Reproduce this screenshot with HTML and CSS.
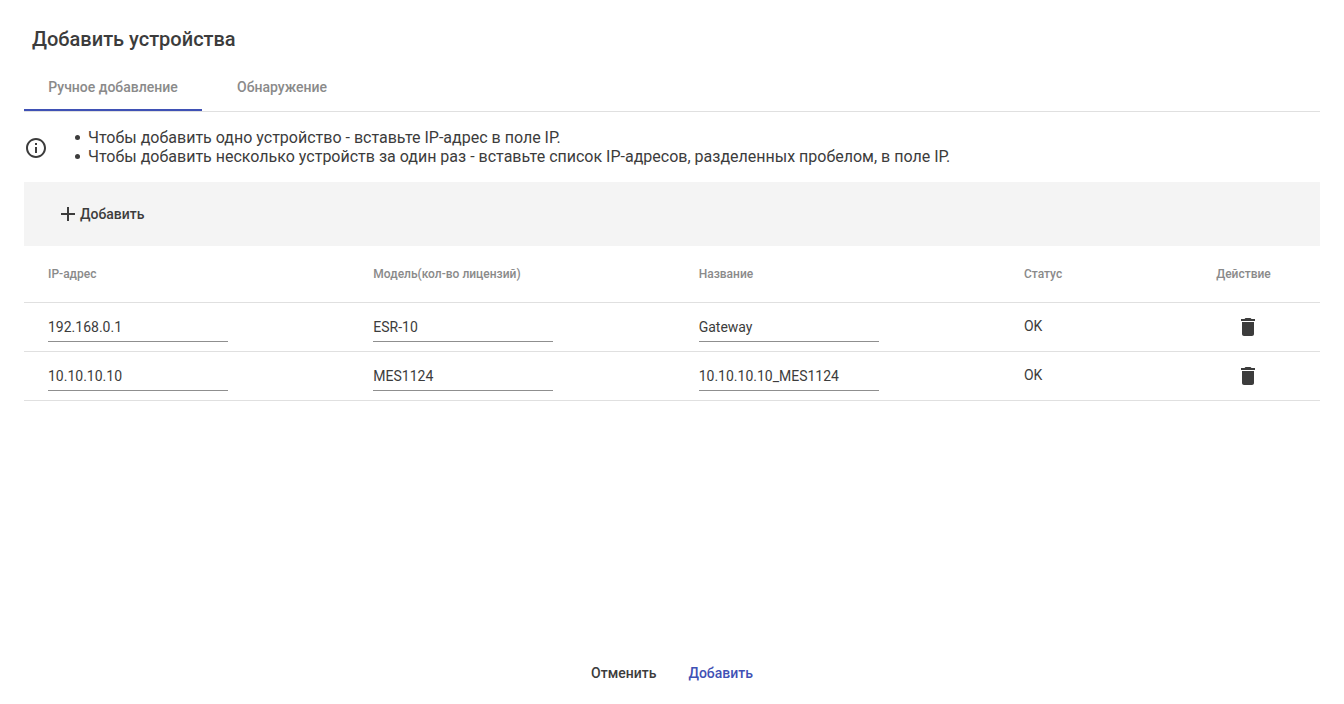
FILE: index.html
```html
<!DOCTYPE html>
<html lang="ru">
<head>
<meta charset="utf-8">
<title>Добавить устройства</title>
<link rel="stylesheet" href="styles.css">
</head>
<body>
<main class="dialog">
  <h1 class="title">Добавить устройства</h1>
  <nav class="tabs">
    <a class="tab tab-active">Ручное добавление</a>
    <a class="tab tab-wide">Обнаружение</a>
  </nav>
  <section class="info">
    <svg class="info-icon" viewBox="0 0 24 24" width="24" height="24"><path fill="#3c3c3c" d="M11 7h2v2h-2zm0 4h2v6h-2zm1-9C6.48 2 2 6.48 2 12s4.48 10 10 10 10-4.48 10-10S17.52 2 12 2zm0 18c-4.41 0-8-3.59-8-8s3.59-8 8-8 8 3.59 8 8-3.59 8-8 8z"/></svg>
    <ul class="info-list">
      <li>Чтобы добавить одно устройство - вставьте IP-адрес в поле IP.</li>
      <li>Чтобы добавить несколько устройств за один раз - вставьте список IP-адресов, разделенных пробелом, в поле IP.</li>
    </ul>
  </section>
  <div class="toolbar">
    <button class="add-btn" type="button">
      <svg viewBox="0 0 24 24" width="24" height="24"><path fill="#3c3c3c" d="M19 13h-6v6h-2v-6H5v-2h6V5h2v6h6v2z"/></svg>
      <span>Добавить</span>
    </button>
  </div>
  <div class="table">
    <div class="row row-head">
      <div>IP-адрес</div>
      <div>Модель(кол-во лицензий)</div>
      <div>Название</div>
      <div>Статус</div>
      <div class="center">Действие</div>
    </div>
    <div class="row">
      <div><input class="field" value="192.168.0.1"></div>
      <div><input class="field" value="ESR-10"></div>
      <div><input class="field" value="Gateway"></div>
      <div class="status">OK</div>
      <div class="center"><svg class="trash" viewBox="0 0 24 24" width="24" height="24"><path fill="#3c3c3c" d="M6 19c0 1.1.9 2 2 2h8c1.1 0 2-.9 2-2V7H6v12zM19 4h-3.5l-1-1h-5l-1 1H5v2h14V4z"/></svg></div>
    </div>
    <div class="row">
      <div><input class="field" value="10.10.10.10"></div>
      <div><input class="field" value="MES1124"></div>
      <div><input class="field" value="10.10.10.10_MES1124"></div>
      <div class="status">OK</div>
      <div class="center"><svg class="trash" viewBox="0 0 24 24" width="24" height="24"><path fill="#3c3c3c" d="M6 19c0 1.1.9 2 2 2h8c1.1 0 2-.9 2-2V7H6v12zM19 4h-3.5l-1-1h-5l-1 1H5v2h14V4z"/></svg></div>
    </div>
  </div>
  <footer class="actions">
    <button class="action" type="button">Отменить</button>
    <button class="action action-primary" type="button">Добавить</button>
  </footer>
</main>
</body>
</html>
```
FILE: styles.css
```css
* { box-sizing: border-box; }
html, body { margin: 0; height: 100%; background: #fff; }
body { font-family: Roboto, "Noto Sans", sans-serif; color: #3c3c3c; overflow: hidden; }
.dialog { height: 704px; padding: 0 24px; display: flex; flex-direction: column; }
.title { margin: 0; padding: 27px 8px 0; height: 64px; font-size: 20px; line-height: 24px; font-weight: 500; }
.tabs { display: flex; height: 48px; border-bottom: 1px solid #e0e0e0; }
.tab { height: 47px; padding: 0 24px; display: flex; align-items: center; justify-content: center; font-size: 14px; font-weight: 500; color: #8a8a8a; border-bottom: 2px solid transparent; }
.tab-active { width: 178px; border-bottom-color: #3f51b5; }
.tab-wide { width: 160px; }
.info { display: flex; align-items: center; height: 70px; }
.info-icon { display: block; margin-top: 2px; }
.info-list { margin: 0; padding: 0 0 0 27px; list-style: none; font-size: 16px; line-height: 19px; }
.info-list li { display: flex; align-items: center; gap: 8px; }
.info-list li::before { content: ""; flex: none; width: 5px; height: 5px; border-radius: 50%; background: #3c3c3c; }
.toolbar { height: 64px; background: #f4f4f4; display: flex; align-items: center; padding-left: 32px; }
.add-btn { display: flex; align-items: center; border: 0; background: none; padding: 0; font: 500 14px/20px Roboto, sans-serif; color: #3c3c3c; }
.table { display: flex; flex-direction: column; }
.row { display: grid; grid-template-columns: 325.33px 325.33px 325.33px 143px 153px; padding-left: 24px; height: 49px; align-items: center; border-bottom: 1px solid #e0e0e0; font-size: 14px; }
.row-head { height: 57px; font-size: 12px; font-weight: 500; color: #8a8a8a; }
.center { display: flex; justify-content: center; }
.field { display: block; width: 180px; height: 29px; margin-top: 1px; padding: 0; border: 0; border-bottom: 1px solid #8f8f8f; outline: none; background: none; font: 14px/20px Roboto, sans-serif; color: #3c3c3c; }
.status { margin-top: -2px; }
.trash { display: block; margin: -1px 0 0 9px; }
.actions { margin-top: auto; height: 63px; display: flex; justify-content: center; align-items: center; gap: 32px; }
.action { border: 0; background: none; padding: 0; font: 500 14px/20px Roboto, sans-serif; color: #3c3c3c; }
.action-primary { color: #3f51b5; }
```
